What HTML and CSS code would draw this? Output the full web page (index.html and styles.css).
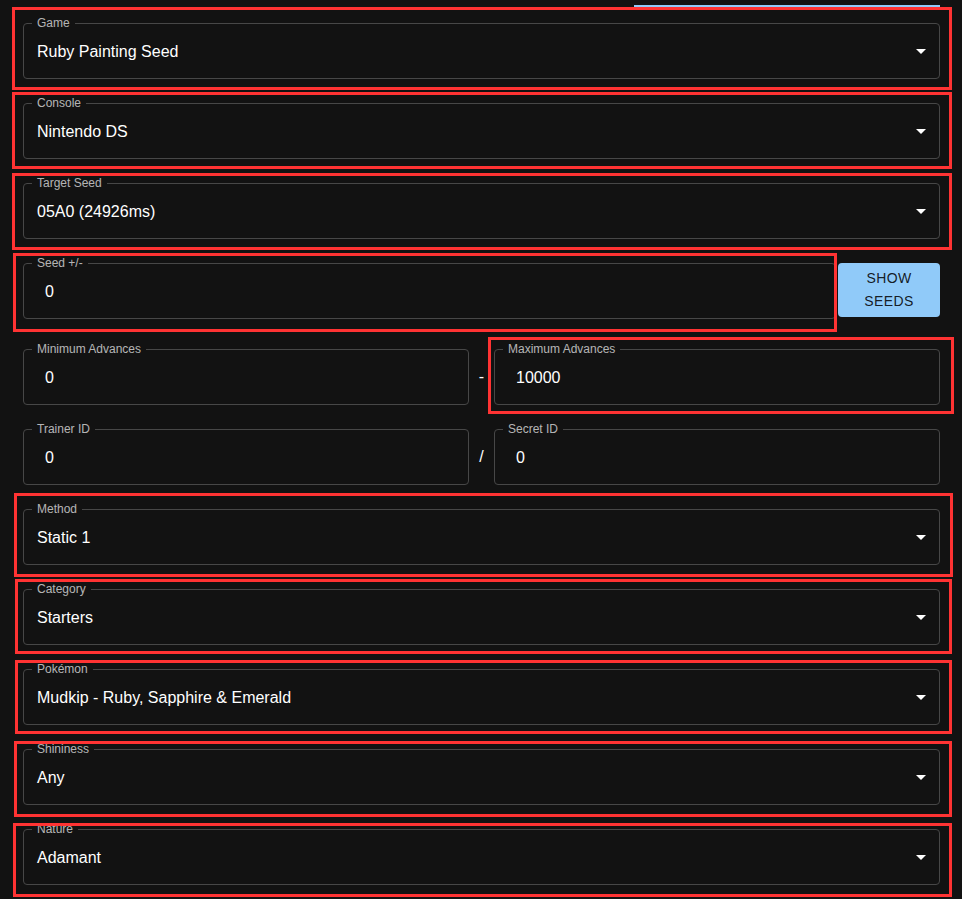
FILE: index.html
```html
<!DOCTYPE html>
<html lang="en">
<head>
<meta charset="utf-8">
<title>Painting Seed</title>
<link rel="stylesheet" href="styles.css">
</head>
<body>
<div class="page">
  <div class="topbar"><div class="topbtn"></div></div>
  <div class="form">
    <div class="field select"><span class="label">Game</span><span class="value">Ruby Painting Seed</span><svg class="arrow" width="10" height="5" viewBox="0 0 10 5"><path d="M0 0h10L5 5z" fill="#fff"/></svg></div>
    <div class="field select"><span class="label">Console</span><span class="value">Nintendo DS</span><svg class="arrow" width="10" height="5" viewBox="0 0 10 5"><path d="M0 0h10L5 5z" fill="#fff"/></svg></div>
    <div class="field select"><span class="label">Target Seed</span><span class="value">05A0 (24926ms)</span><svg class="arrow" width="10" height="5" viewBox="0 0 10 5"><path d="M0 0h10L5 5z" fill="#fff"/></svg></div>
    <div class="seed-row">
      <div class="field input grow"><span class="label">Seed +/-</span><span class="value">0</span></div>
      <button class="show-btn">SHOW<br>SEEDS</button>
    </div>
    <div class="pair">
      <div class="field input"><span class="label">Minimum Advances</span><span class="value">0</span></div>
      <div class="sep">-</div>
      <div class="field input"><span class="label">Maximum Advances</span><span class="value">10000</span></div>
    </div>
    <div class="pair">
      <div class="field input"><span class="label">Trainer ID</span><span class="value">0</span></div>
      <div class="sep">/</div>
      <div class="field input"><span class="label">Secret ID</span><span class="value">0</span></div>
    </div>
    <div class="field select"><span class="label">Method</span><span class="value">Static 1</span><svg class="arrow" width="10" height="5" viewBox="0 0 10 5"><path d="M0 0h10L5 5z" fill="#fff"/></svg></div>
    <div class="field select"><span class="label">Category</span><span class="value">Starters</span><svg class="arrow" width="10" height="5" viewBox="0 0 10 5"><path d="M0 0h10L5 5z" fill="#fff"/></svg></div>
    <div class="field select"><span class="label">Pokémon</span><span class="value">Mudkip - Ruby, Sapphire &amp; Emerald</span><svg class="arrow" width="10" height="5" viewBox="0 0 10 5"><path d="M0 0h10L5 5z" fill="#fff"/></svg></div>
    <div class="field select"><span class="label">Shininess</span><span class="value">Any</span><svg class="arrow" width="10" height="5" viewBox="0 0 10 5"><path d="M0 0h10L5 5z" fill="#fff"/></svg></div>
    <div class="field select"><span class="label">Nature</span><span class="value">Adamant</span><svg class="arrow" width="10" height="5" viewBox="0 0 10 5"><path d="M0 0h10L5 5z" fill="#fff"/></svg></div>
  </div>

  <div class="mark m1"></div>
  <div class="mark m2"></div>
  <div class="mark m3"></div>
  <div class="mark m4"></div>
  <div class="mark m5"></div>
  <div class="mark m6"></div>
  <div class="mark m7"></div>
  <div class="mark m8"></div>
  <div class="mark m9"></div>
  <div class="mark m10"></div>
</div>
</body>
</html>
```

FILE: styles.css
```css
* { box-sizing: border-box; }
html, body {
  margin: 0;
  background: #121212;
  height: 100%;
  overflow: hidden;
}
body {
  font-family: "Liberation Sans", Arial, sans-serif;
  color: #fff;
}
.page {
  position: relative;
  padding: 0 22px 0 23px;
}
.topbar {
  height: 7px;
  display: flex;
  justify-content: flex-end;
  align-items: flex-end;
}
.topbtn {
  width: 306px;
  height: 2px;
  background: #90caf9;
}
.form {
  padding-top: 16px;
  display: flex;
  flex-direction: column;
  gap: 24px;
}
.field {
  position: relative;
  height: 56px;
  border: 1px solid #474747;
  border-radius: 4px;
  display: flex;
  align-items: center;
}
.field.select { padding: 0 13px 0 13px; }
.field.input { padding: 0 13px 0 21px; }
.label {
  position: absolute;
  left: 8px;
  top: -7px;
  padding: 0 5px;
  background: #121212;
  font-size: 12px;
  line-height: 12px;
  color: rgba(255, 255, 255, 0.7);
  white-space: nowrap;
}
.value {
  font-size: 16px;
  color: #fff;
  white-space: nowrap;
  padding-top: 2px;
}
.arrow {
  margin-left: auto;
  display: block;
}
.seed-row {
  display: flex;
  align-items: flex-start;
  gap: 2px;
  margin-bottom: 6px;
}
.grow { flex: 1; }
.show-btn {
  width: 102px;
  height: 54px;
  flex: none;
  border: none;
  border-radius: 4px;
  background: #90caf9;
  color: rgba(0, 0, 0, 0.87);
  font-family: "Liberation Sans", Arial, sans-serif;
  font-size: 14px;
  font-weight: 500;
  letter-spacing: 0.4px;
  line-height: 23px;
  padding: 4px 8px;
  text-align: center;
}
.pair {
  display: grid;
  grid-template-columns: 446px 25px 446px;
  align-items: center;
}
.sep {
  text-align: center;
  font-size: 16px;
  color: #fff;
}
.mark {
  position: absolute;
  border: 3px solid #ff3333;
  pointer-events: none;
}
.m1 { left: 12px; top: 7px; width: 940px; height: 83px; }
.m2 { left: 12px; top: 92px; width: 940px; height: 77px; }
.m3 { left: 12px; top: 173px; width: 940px; height: 77px; }
.m4 { left: 13px; top: 253px; width: 824px; height: 79px; }
.m5 { left: 488px; top: 337px; width: 466px; height: 77px; }
.m6 { left: 14px; top: 493px; width: 939px; height: 84px; }
.m7 { left: 15px; top: 579px; width: 937px; height: 75px; }
.m8 { left: 15px; top: 660px; width: 937px; height: 74px; }
.m9 { left: 14px; top: 741px; width: 938px; height: 76px; }
.m10 { left: 13px; top: 823px; width: 939px; height: 74px; }
```
